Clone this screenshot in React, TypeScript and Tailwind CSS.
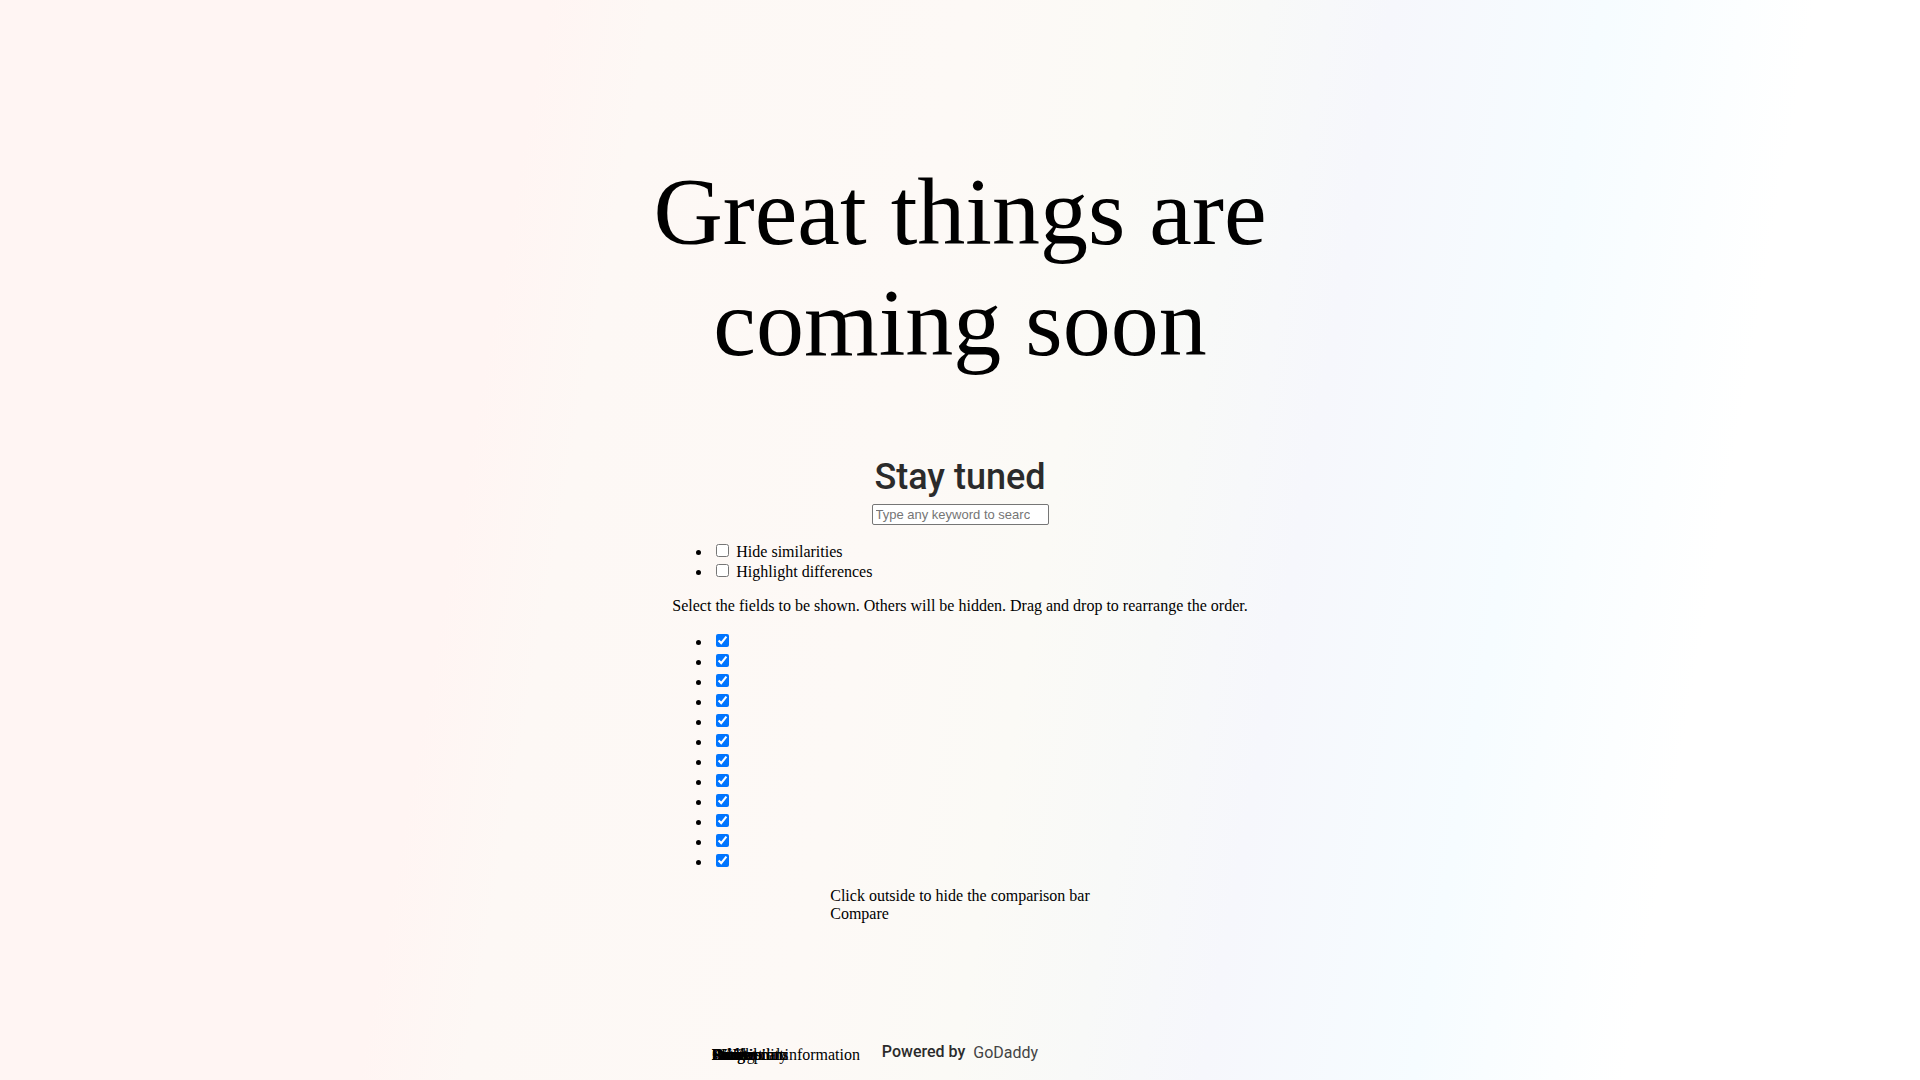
import { useState } from 'react';

const settings = ['Hide similarities', 'Highlight differences'];

const fields = [
  'Image',
  'SKU',
  'Rating',
  'Price',
  'Stock',
  'Availability',
  'Add to cart',
  'Description',
  'Content',
  'Weight',
  'Dimensions',
  'Additional information',
];

function CompareSettings() {
  const [active, setActive] = useState<string[]>([]);

  function toggle(name: string) {
    setActive(active.includes(name) ? active.filter((n) => n !== name) : [...active, name]);
  }

  return (
    <ul className="my-4 list-disc pl-10">
      {settings.map((name) => (
        <li key={name} className="h-5">
          <label>
            <input
              type="checkbox"
              checked={active.includes(name)}
              onChange={() => toggle(name)}
              className="mt-[3px] mr-[3px] mb-[3px] ml-1 size-[13px]"
            />{' '}
            {name}
          </label>
        </li>
      ))}
    </ul>
  );
}

function CompareFields() {
  return (
    <ul className="my-4 list-disc pl-10">
      {fields.map((name) => (
        <li key={name} className="h-5">
          <input
            type="checkbox"
            id={name}
            defaultChecked
            className="mt-[3px] mr-[3px] mb-[3px] ml-1 size-[13px]"
          />
        </li>
      ))}
    </ul>
  );
}

export default function App() {
  return (
    <div className="relative flex min-h-screen flex-col items-center bg-[linear-gradient(100deg,#fff5f3_0%,#fff5f3_26%,#fdf8f5_31%,#fdf9f6_46%,#fbfaf6_54%,#f8f9f8_60%,#f6f7fc_66%,#f6fcff_76%,#ffffff_86%)] font-['Liberation_Serif',serif] text-base leading-[18px] text-black">
      <main className="flex flex-1 flex-col items-center pt-39">
        <h1 className="max-w-[640px] text-center text-8xl leading-[111px]">Great things are coming soon</h1>
        <h2 className="mt-[74px] font-['Roboto',sans-serif] text-4xl leading-[50px] font-medium text-[#2b2b2b]">
          Stay tuned
        </h2>
        <input
          type="text"
          aria-label="Search"
          placeholder="Type any keyword to search..."
          className="mt-0.5 h-[21px] w-[177px] rounded-xs border border-[#767676] bg-white pr-[18px] pl-[3px] font-['Liberation_Sans',sans-serif] text-[13px] placeholder:text-[#757575]"
        />
        <section>
          <CompareSettings />
          <p>Select the fields to be shown. Others will be hidden. Drag and drop to rearrange the order.</p>
          <CompareFields />
        </section>
        <div>
          <p>Click outside to hide the comparison bar</p>
          <p>Compare</p>
        </div>
      </main>
      <footer className="flex h-[37px] items-start gap-2 font-['Roboto',sans-serif] text-base leading-[20px] text-[#2b2b2b]">
        <span className="font-medium leading-[18px]">Powered by</span>
        <a href="#godaddy" className="text-[#444444]">GoDaddy</a>
      </footer>
      {/* field names, all stacked on the same spot */}
      <div className="absolute bottom-4 left-1/2 -ml-[248px] grid">
        {fields.map((name) => (
          <label key={name} htmlFor={name} className="col-start-1 row-start-1 whitespace-nowrap">
            {name}
          </label>
        ))}
      </div>
    </div>
  );
}
